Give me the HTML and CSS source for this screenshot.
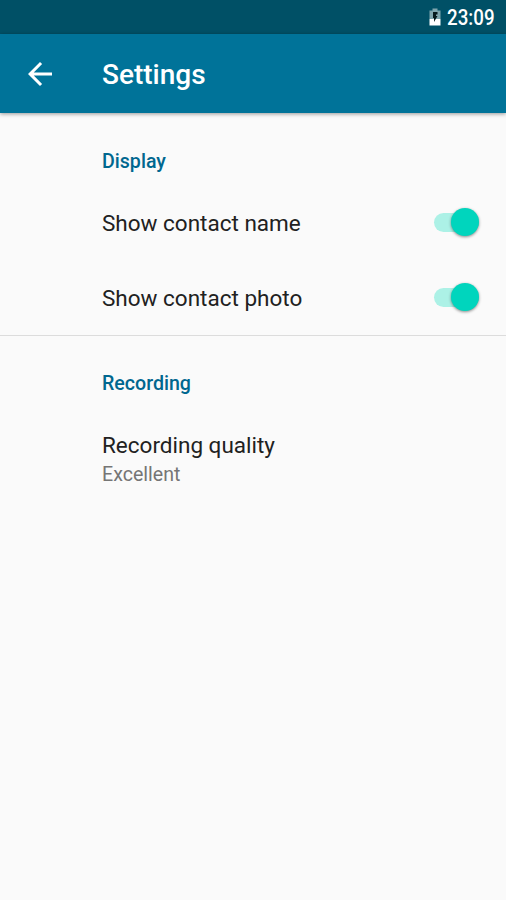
FILE: index.html
```html
<!DOCTYPE html>
<html lang="en">
<head>
  <meta charset="UTF-8">
  <meta name="viewport" content="width=device-width, initial-scale=1.0">
  <title>Settings</title>
  <link rel="stylesheet" href="styles.css">
</head>
<body>
  <div class="status-bar">
    <svg class="battery" viewBox="0 0 12 18" width="12" height="18">
      <path fill="#7fa5ae" d="M3.500 0.500h5v2H11.500V11H0.500V2.500h3z"/>
      <path fill="#fff" d="M0.500 11h11v6.500h-11z"/>
      <path fill="#06191d" d="M4 4h4.500v2.500H7v1.500h1.500L5 14V10H4z"/>
    </svg>
    <span class="clock">23:09</span>
  </div>
  <header class="toolbar">
    <svg class="back" viewBox="0 0 24 24" width="36" height="36">
      <path fill="#fff" d="M20 11H7.830l5.590-5.590L12 4l-8 8 8 8 1.410-1.410L7.830 13H20v-2z"/>
    </svg>
    <h1>Settings</h1>
  </header>
  <main>
    <section class="group">
      <h2>Display</h2>
      <div class="row">
        <span class="title">Show contact name</span>
        <span class="switch"><span class="thumb"></span></span>
      </div>
      <div class="row">
        <span class="title">Show contact photo</span>
        <span class="switch"><span class="thumb"></span></span>
      </div>
    </section>
    <section class="group">
      <h2>Recording</h2>
      <div class="row two-line">
        <span class="title">Recording quality</span>
        <span class="summary">Excellent</span>
      </div>
    </section>
  </main>
</body>
</html>
```
FILE: styles.css
```css
* { box-sizing: border-box; }
body {
  margin: 0;
  min-height: 100vh;
  background: #fafafa;
  color: #212121;
  font-family: Roboto, "Liberation Sans", sans-serif;
}
.status-bar {
  height: 34px;
  padding-right: 11px;
  display: flex;
  align-items: center;
  justify-content: flex-end;
  background: #005066;
  color: #fff;
}
.battery { margin-right: -1px; }
.clock {
  font-size: 21.500px;
  font-weight: 500;
  line-height: 34px;
  padding-top: 1px;
  transform: scaleX(0.87);
  transform-origin: right;
}
.toolbar {
  height: 79px;
  padding-left: 22px;
  display: flex;
  align-items: center;
  background: #007399;
  color: #fff;
  box-shadow: 0 1px 4px rgba(0,0,0,0.4);
}
.toolbar h1 { margin: 2px 0 0 44px; font-size: 28px; font-weight: 500; }
.group { padding: 24px 27px 0 102px; }
.group + .group { border-top: 1px solid #dcdcdc; }
.group h2 {
  margin: 0;
  height: 48px;
  line-height: 49px;
  font-size: 19.600px;
  font-weight: 500;
  color: #00678f;
}
.group + .group h2 { line-height: 47px; }
.row {
  height: 75px;
  display: flex;
  align-items: center;
  justify-content: space-between;
}
.title { font-size: 22.500px; }
.two-line {
  height: 102px;
  flex-direction: column;
  align-items: flex-start;
  justify-content: center;
  gap: 5px;
}
.summary { font-size: 19.600px; color: #757575; }
.switch {
  width: 45px;
  height: 19px;
  display: flex;
  align-items: center;
  justify-content: flex-end;
  border-radius: 10px;
  background: #acf1e6;
}
.thumb {
  width: 28px;
  height: 28px;
  margin-bottom: 1px;
  border-radius: 50%;
  background: #00d5bd;
  box-shadow: 0 1px 3px rgba(0,0,0,0.45);
}
```
